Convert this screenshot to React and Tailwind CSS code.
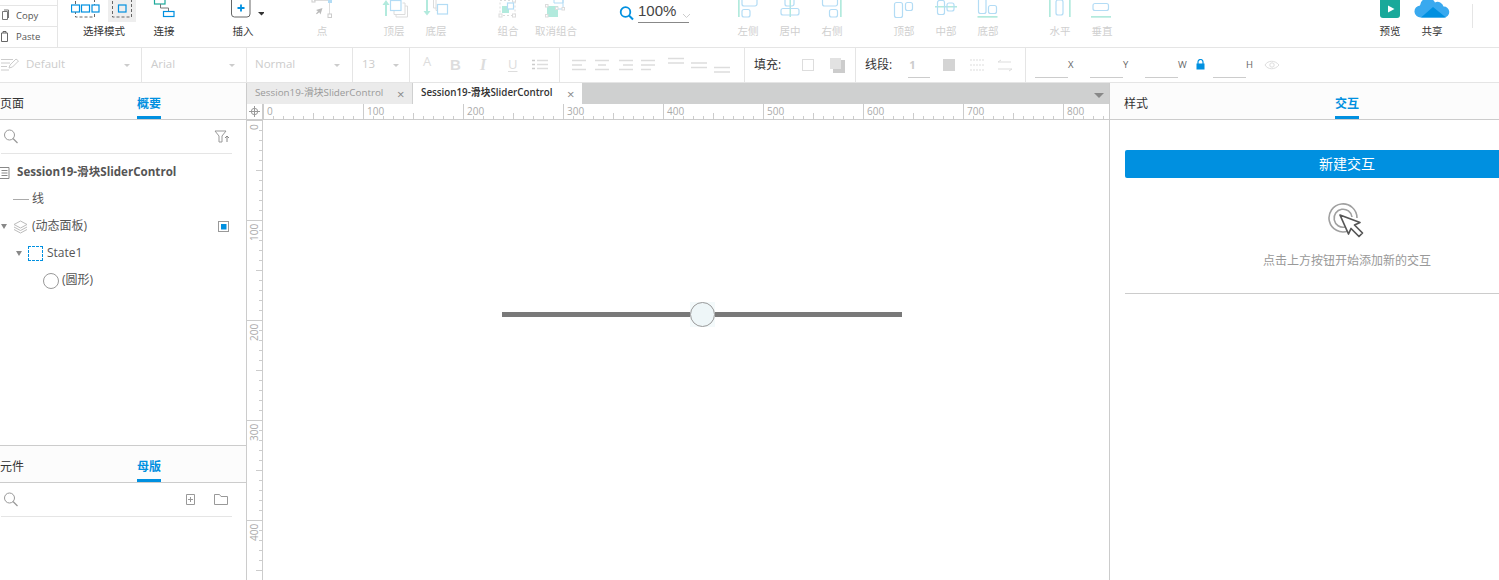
import React from "react";

const BL = "#b3dcf5";
const TL = "#b2eadd";
const GR = "#dcdcdc";
const FONT = { fontFamily: '"Open Sans","Noto Sans CJK SC",sans-serif' };

function Tool({ w = 42, ml = 0, label, dim, children }) {
  return (
    <div className="flex flex-col items-center shrink-0" style={{ width: w, marginLeft: ml }}>
      <svg width={w} height="23" viewBox={`0 0 ${w} 23`} className="block">{children}</svg>
      <div className={`mt-[1px] text-[10.5px] leading-[14px] whitespace-nowrap ${dim ? "text-[#cfcfcf]" : "text-[#333]"}`}>{label}</div>
    </div>
  );
}

const R = (p) => <rect fill="none" stroke={BL} strokeWidth="1.2" rx="2" {...p} />;
const T = (p) => <rect fill={TL} {...p} />;

function TopBar() {
  return (
    <div className="flex h-[48px] border-b border-[#e5e5e5] shrink-0 bg-white">
      <div className="w-[58px] shrink-0 border-r border-[#e5e5e5] pt-[5px] text-[9.5px] text-[#555]">
        <div className="h-[21px] border-t border-[#e5e5e5] flex items-center">
          <svg width="16" height="14" viewBox="0 0 16 14"><path d="M2.500 2.500h5v8h-5zM4 1h4.500v1.500M8.500 1v8" fill="none" stroke="#777" /></svg>
          <span>Copy</span>
        </div>
        <div className="h-[21px] border-t border-[#e5e5e5] flex items-center">
          <svg width="16" height="14" viewBox="0 0 16 14"><path d="M1.500 3h6v8.500h-6zM3 3V1.500h3V3" fill="none" stroke="#666" /></svg>
          <span>Paste</span>
        </div>
      </div>
      <Tool w={66} ml={13} label="选择模式">
        <rect x="37" y="0" width="28" height="22" fill="#eee" />
        <rect x="4.500" y="-2" width="19" height="19" fill="none" stroke="#666" strokeDasharray="3 2" />
        <g fill="#fff" stroke="#0090e0" strokeWidth="1.200"><rect x="0.500" y="5" width="8" height="7" /><rect x="10.500" y="5" width="8" height="7" /><rect x="21" y="5" width="7" height="7" /></g>
        <rect x="41.500" y="-2" width="19" height="19" fill="none" stroke="#666" strokeDasharray="3 2" />
        <rect x="47.500" y="5" width="7.500" height="7" fill="none" stroke="#0090e0" strokeWidth="1.200" />
      </Tool>
      <Tool ml={6} label="连接">
        <rect x="11.500" y="-3" width="10.500" height="7" fill="none" stroke="#19a99a" strokeWidth="1.200" />
        <path d="M17.500 4v4h8v3" fill="none" stroke="#777" />
        <rect x="20.500" y="11.500" width="10.500" height="5" fill="none" stroke="#0090e0" strokeWidth="1.200" />
      </Tool>
      <Tool ml={37} label="插入">
        <rect x="9.500" y="-4" width="18.500" height="21" rx="3" fill="none" stroke="#666" />
        <path d="M19 4.500v7M15.500 8h7" stroke="#0090e0" strokeWidth="1.800" />
        <path d="M36 12h7l-3.500 3.500z" fill="#333" />
      </Tool>
      <Tool ml={37} label="点" dim>
        <path d="M13 0.500h15.500v14" fill="none" stroke="#ddd" />
        <rect x="11" y="-1" width="3" height="3" fill="none" stroke="#ccc" />
        <rect x="27" y="-1" width="4" height="4" fill={BL} />
        <rect x="27" y="14" width="3.500" height="3.500" fill="#fff" stroke="#ccc" />
        <path d="M21.500 8l-2 6.500-1.200-2.200-2.500 2-.8-.8 2-2.300-2-1.200z" fill="#bbb" />
      </Tool>
      <Tool ml={30} label="顶层" dim>
        <path d="M13 16V2" stroke={TL} strokeWidth="2" /><path d="M9.500 5L13 0l3.500 5z" fill={TL} />
        <path d="M29.500 3h2.500v11.500H21V11M32 6h2.500V17H23v-2.500" fill="none" stroke={GR} />
        <rect x="17.500" y="0.500" width="10.500" height="10" fill="#fff" stroke={BL} strokeWidth="1.200" />
      </Tool>
      <Tool label="底层" dim>
        <path d="M12 0V12" stroke={TL} strokeWidth="2" /><path d="M8.500 11h7L12 15.500z" fill={TL} />
        <path d="M18.500 0v8h3M21 0v10.500h2" fill="none" stroke={GR} />
        <rect x="22.500" y="4.500" width="10" height="9.500" fill="#fff" stroke={BL} strokeWidth="1.200" />
      </Tool>
      <Tool ml={30} label="组合" dim>
        <rect x="13" y="0.500" width="15" height="15" fill="none" stroke={GR} strokeDasharray="2 2" />
        <g fill="#fff" stroke={GR}><rect x="25.500" y="-1" width="3" height="3" /><rect x="25.500" y="14" width="3" height="3" /><rect x="12" y="14" width="3" height="3" /></g>
        <T x="15" y="6" width="7" height="7" />
        <rect x="20.500" y="3" width="6" height="6" fill="#fff" stroke={BL} strokeWidth="1.200" />
      </Tool>
      <Tool ml={6} label="取消组合" dim>
        <path d="M19 0v3h9V-1" fill="none" stroke={BL} /><path d="M28 0v9h-6" fill="none" stroke={BL} />
        <T x="12" y="6" width="11" height="11" />
        <g fill="#fff" stroke={GR}><rect x="27" y="7.500" width="2.500" height="2.500" /><rect x="10.500" y="4.500" width="2.500" height="2.500" /><rect x="10.500" y="14.500" width="2.500" height="2.500" /><rect x="20.500" y="7" width="2.500" height="2.500" /></g>
      </Tool>
      <div className="ml-[61px] w-[51px] shrink-0 relative h-[23px] border-b border-[#888] flex items-start">
        <svg width="18" height="18" viewBox="0 0 18 18" className="absolute left-[-20px] top-[5px]"><circle cx="7.500" cy="7" r="4.800" fill="none" stroke="#0090e0" strokeWidth="1.800" /><path d="M11 10.500l4 4" stroke="#0090e0" strokeWidth="2" /></svg>
        <span className="text-[15px] leading-[22px] text-[#444]" style={{ fontFamily: '"Liberation Sans",sans-serif' }}>100%</span>
        <svg width="10" height="6" viewBox="0 0 10 6" className="absolute left-[44px] top-[13px]"><path d="M1 1l3.500 3.500L8 1" fill="none" stroke="#ccc" /></svg>
      </div>
      <Tool ml={38} label="左侧" dim>
        <rect x="11" y="-1" width="1.700" height="18" fill={TL} /><R x="15" y="-4" width="15" height="10" /><R x="15" y="9.500" width="8" height="7.500" />
      </Tool>
      <Tool label="居中" dim>
        <rect x="20.500" y="0" width="1.500" height="17" fill={TL} /><R x="16" y="-3" width="9" height="9" /><R x="12" y="8.500" width="18" height="6.500" />
      </Tool>
      <Tool label="右侧" dim>
        <rect x="29" y="-1" width="1.700" height="18" fill={TL} /><R x="11.500" y="-4" width="15" height="10" /><R x="18.500" y="9.500" width="8" height="7.500" />
      </Tool>
      <Tool ml={30} label="顶部" dim>
        <R x="11.500" y="2.500" width="8" height="15" /><R x="22.500" y="2.500" width="7" height="8" />
      </Tool>
      <Tool label="中部" dim>
        <rect x="10" y="6" width="22" height="1.500" fill={TL} /><R x="12.500" y="0.500" width="7" height="14" /><R x="22" y="3" width="7" height="8" />
      </Tool>
      <Tool label="底部" dim>
        <rect x="10.500" y="16" width="20" height="1.700" fill={TL} /><R x="11.500" y="-2" width="7.500" height="15.500" /><R x="21.500" y="5.500" width="8" height="8" />
      </Tool>
      <Tool ml={30} label="水平" dim>
        <rect x="10" y="-1" width="1.700" height="18" fill={TL} /><rect x="30" y="-1" width="1.700" height="18" fill={TL} /><R x="17" y="0" width="7" height="15" />
      </Tool>
      <Tool label="垂直" dim>
        <rect x="10" y="16" width="20" height="1.700" fill={TL} /><R x="12" y="3.500" width="15.500" height="7" />
      </Tool>
      <Tool ml={246} label="预览">
        <path d="M11 -2h20v17a3 3 0 0 1-3 3H14a3 3 0 0 1-3-3z" fill="#19a99a" />
        <path d="M19 5.500l6.500 3.500-6.500 3.500z" fill="#fff" />
      </Tool>
      <Tool label="共享">
        <path d="M10 17.500a6 6 0 0 1-1-12 8 8 0 0 1 15-3 6 6 0 0 1 8.500 4A5.500 5.500 0 0 1 33 17.500z" fill="#39a9ef" />
        <path d="M10 17.500L22 7l13 10.500z" fill="#0090e0" />
      </Tool>
      <div className="ml-[19px] mt-[4px] w-px h-[24px] bg-[#e5e5e5] shrink-0" />
    </div>
  );
}

const Caret = ({ l }) => <span className="absolute top-[16px] w-0 h-0 border-x-[3.500px] border-x-transparent border-t-[3.500px] border-t-[#ccc]" style={{ left: l }} />;

function Cell({ w, children, className = "" }) {
  return <div className={`relative shrink-0 h-full border-r border-[#e5e5e5] flex items-center ${className}`} style={{ width: w }}>{children}</div>;
}

function Coord({ label, ml = 0, w = 33, tw = 7 }) {
  return (
    <div className="flex items-center h-full shrink-0" style={{ marginLeft: ml }}>
      <div className="h-[24px] border-b border-[#ccc] mt-[1px]" style={{ width: w }} />
      <span className="text-[9.500px] text-[#666] leading-none mt-[-1px]" style={{ width: tw }}>{label}</span>
    </div>
  );
}

function FormatBar() {
  return (
    <div className="flex h-[35px] border-b border-[#e5e5e5] shrink-0 bg-white text-[11.500px] text-[#ccc]">
      <Cell w={142}>
        <svg width="20" height="16" viewBox="0 0 20 16" className="ml-[1px]"><path d="M0 2.500h12M0 6h9M0 9.500h6M0 13h8" stroke="#ccc" /><path d="M8 11l1-3 6-6 2.500 2-6 6z" fill="#fff" stroke="#ccc" /></svg>
        <span className="ml-[5px] mt-[-2px]">Default</span><Caret l={124} />
      </Cell>
      <Cell w={105}><span className="ml-[9px] mt-[-2px]">Arial</span><Caret l={87} /></Cell>
      <Cell w={106}><span className="ml-[8px] mt-[-2px]">Normal</span><Caret l={87} /></Cell>
      <Cell w={57}><span className="ml-[9px] mt-[-2px]">13</span><Caret l={40} /></Cell>
      <Cell w={150}>
        <span className="ml-[13px] w-[10px] text-[13px] mt-[-6px] text-[#ddd]">A</span>
        <span className="ml-[17px] w-[11px] text-[15px] font-bold text-[#ddd]" style={{ fontFamily: '"Liberation Sans",sans-serif' }}>B</span>
        <span className="ml-[19px] w-[8px] text-[16px] italic font-bold text-[#ddd]" style={{ fontFamily: '"Liberation Serif",serif' }}>I</span>
        <span className="ml-[20px] w-[10px] text-[13px] underline underline-offset-2 text-[#ddd]">U</span>
        <svg width="16" height="12" viewBox="0 0 16 12" className="ml-[14px]"><path d="M5 1.500h11M5 5.500h11M5 9.500h11" stroke="#ddd" strokeWidth="1.500" /><path d="M0 1.500h3M0 5.500h3M0 9.500h3" stroke="#ccc" strokeWidth="1.500" /></svg>
      </Cell>
      <Cell w={185}>
        <svg width="175" height="34" viewBox="0 0 175 34" className="ml-[1px]" stroke="#ddd" strokeWidth="1.300">
          <path d="M11 12.500h14M11 17h10M11 21.500h14" />
          <path d="M34 12.500h14M37 17h8M34 21.500h14" />
          <path d="M58 12.500h14M62 17h10M58 21.500h14" />
          <path d="M80 12.500h14M80 17h14M80 21.500h10" />
          <path d="M107 10.500h16M107 15h16" />
          <path d="M130 15h16M130 19.500h16" />
          <path d="M153 19.500h16M153 24h16" />
        </svg>
      </Cell>
      <Cell w={111}>
        <span className="ml-[9px] text-[12px] text-[#333]">填充:</span>
        <svg width="42" height="16" viewBox="0 0 42 16" className="ml-[21px]" style={{ overflow: "visible" }}>
          <rect x="0.500" y="2.500" width="11" height="11" fill="#fff" stroke="#ddd" />
          <rect x="31" y="3" width="12" height="13" fill="#ccc" /><rect x="28" y="1" width="11" height="11" fill="#e2e2e2" />
        </svg>
      </Cell>
      <Cell w={170}>
        <span className="ml-[9px] text-[12px] text-[#333]">线段:</span>
        <div className="ml-[16px] w-[22px] h-[24px] border-b border-[#ccc] mt-[1px] flex items-center font-bold text-[11px] pl-[1px]">1</div>
        <svg width="72" height="16" viewBox="0 0 72 16" className="ml-[13px]">
          <rect x="0" y="2" width="12" height="12" fill="#d4d4d4" />
          <path d="M27 3h15M27 8h15M27 13h15" stroke="#ddd" strokeDasharray="2 1" />
          <path d="M55 5h13M55 5l3-2M55 12h14M69 12l-3 2" stroke="#ddd" fill="none" />
        </svg>
      </Cell>
      <Coord label="X" ml={9} />
      <Coord label="Y" ml={15} />
      <Coord label="W" ml={15} tw={11} />
      <svg width="9" height="11" viewBox="0 0 9 11" className="ml-[7px] self-center mt-[-1px] shrink-0"><path d="M2 5V3a2.500 2.500 0 0 1 5 0v2" fill="none" stroke="#0090e0" strokeWidth="1.200" /><rect x="0.500" y="4.500" width="8" height="6" fill="#0090e0" /></svg>
      <Coord label="H" ml={8} />
      <svg width="16" height="10" viewBox="0 0 16 10" className="ml-[11px] self-center shrink-0"><path d="M1 5c3-5 10-5 14 0-4 5-11 5-14 0z" fill="none" stroke="#ddd" /><circle cx="8" cy="5" r="2.200" fill="none" stroke="#ddd" /></svg>
    </div>
  );
}

const Search = () => (
  <svg width="16" height="16" viewBox="0 0 16 16"><circle cx="6.500" cy="6" r="5" fill="none" stroke="#999" /><path d="M10 9.500l4.500 4.500" stroke="#999" strokeWidth="1.200" /></svg>
);

function PanelTabs({ a, b }) {
  return (
    <div className="flex h-[37px] bg-[#fcfcfc] border-b border-[#ccc] shrink-0 text-[12px]">
      <div className="w-[137px] leading-[41px] text-[#333]">{a}</div>
      <div className="h-[36px] leading-[41px] font-bold text-[#0090e0] border-b-[3px] border-[#0090e0] w-[24px] box-border whitespace-nowrap">{b}</div>
    </div>
  );
}

function TreeRow({ children, text, bold, end }) {
  return (
    <div className={`flex items-center h-[27px] text-[#555] ${bold ? "font-bold text-[11.6px]" : "text-[12px]"}`}>
      {children}<span className="whitespace-nowrap mt-[-1px]">{text}</span>{end}
    </div>
  );
}

const Tri = ({ ml }) => <span className="shrink-0 w-0 h-0 border-x-[3.500px] border-x-transparent border-t-[5px] border-t-[#888]" style={{ marginLeft: ml }} />;

function LeftPanel() {
  return (
    <div className="w-[247px] shrink-0 border-r border-[#ccc] flex flex-col h-full bg-white">
      <PanelTabs a="页面" b="概要" />
      <div className="h-[326px] border-b border-[#ccc] flex flex-col shrink-0">
        <div className="ml-[1px] w-[231px] h-[34px] border-b border-[#e5e5e5] flex items-center justify-between pl-[2px] pr-[2px] shrink-0">
          <Search />
          <svg width="16" height="14" viewBox="0 0 16 14"><path d="M1 1h11L8 6v6H5V6z" fill="none" stroke="#999" /><path d="M13 12V6M11 8l2-2 2 2" fill="none" stroke="#888" /></svg>
        </div>
        <div className="pt-[5px]">
          <TreeRow bold text="Session19-滑块SliderControl">
            <svg width="17" height="12" viewBox="0 0 17 12" className="shrink-0"><path d="M-1 .5h10v11H-1zM1.500 3.500h6M1.500 6h6M1.500 8.500h6" fill="none" stroke="#888" /></svg>
          </TreeRow>
          <TreeRow text="线">
            <span className="ml-[13px] mr-[3px] w-[16px] h-[1.500px] bg-[#aaa] shrink-0" />
          </TreeRow>
          <TreeRow text="(动态面板)" end={
            <svg width="12" height="12" viewBox="0 0 12 12" className="ml-auto mr-[16px] shrink-0"><rect x="0.500" y="0.500" width="10" height="10" fill="#fff" stroke="#999" /><rect x="3" y="3" width="5.500" height="5.500" fill="#0090e0" /></svg>
          }>
            <Tri ml={1} />
            <svg width="15" height="14" viewBox="0 0 15 14" className="ml-[6px] mr-[4px] shrink-0"><path d="M7.500 1L14 4.500 7.500 8 1 4.500zM1 7l6.500 3.500L14 7M1 9.500L7.500 13 14 9.500" fill="none" stroke="#bbb" /></svg>
          </TreeRow>
          <TreeRow text="State1">
            <Tri ml={16} />
            <span className="ml-[6px] mr-[4px] w-[15px] h-[15px] border border-dashed border-[#0090e0] shrink-0" />
          </TreeRow>
          <TreeRow text="(圆形)">
            <span className="ml-[43px] mr-[3px] w-[16px] h-[16px] rounded-full border border-[#999] shrink-0" />
          </TreeRow>
        </div>
      </div>
      <PanelTabs a="元件" b="母版" />
      <div className="ml-[1px] w-[231px] h-[34px] border-b border-[#e5e5e5] flex items-center pl-[2px] shrink-0">
        <Search />
        <svg width="10" height="11" viewBox="0 0 10 11" className="ml-[167px]"><path d="M.5.500h8v10h-8zM4.500 3v5M2 5.500h5" fill="none" stroke="#999" /></svg>
        <svg width="14" height="11" viewBox="0 0 14 11" className="ml-[18px]"><path d="M.5 10.500V.5h5l1.500 2h6.500v8z" fill="none" stroke="#999" /></svg>
      </div>
    </div>
  );
}

function HRuler() {
  const ticks = [];
  for (let i = 0; i <= 840; i += 10) {
    const major = i % 100 === 0;
    const h = major ? 15 : i % 50 === 0 ? 6 : 3;
    ticks.push(<rect key={i} x={i} y={15 - h} width="1" height={h} fill="#ccc" />);
    if (major) ticks.push(<text key={"t" + i} x={i + 4} y="11" fontSize="10" fill="#aaa">{i}</text>);
  }
  return <svg width="846" height="15" viewBox="0 0 846 15" className="block" style={FONT}>{ticks}</svg>;
}

function VRuler() {
  const ticks = [];
  for (let i = 0; i <= 460; i += 10) {
    const major = i % 100 === 0;
    const w = major ? 15 : i % 50 === 0 ? 6 : 3;
    ticks.push(<rect key={i} x={15 - w} y={i} width={w} height="1" fill="#ccc" />);
    if (major) ticks.push(<text key={"t" + i} transform={`translate(11 ${i + (i === 0 ? 10 : 21)}) rotate(-90)`} fontSize="10" fill="#aaa">{i}</text>);
  }
  return <svg width="15" height="460" viewBox="0 0 15 460" className="block" style={FONT}>{ticks}</svg>;
}

function Center() {
  return (
    <div className="flex-1 min-w-0 flex flex-col h-full bg-white overflow-hidden">
      <div className="flex h-[21px] bg-[#cfd0d0] shrink-0 relative text-[9.800px]">
        <div className="w-[165px] bg-[#ebebeb] flex items-center pl-[8px] text-[#999] relative whitespace-nowrap">Session19-滑块SliderControl<span className="absolute left-[150px] text-[13px] leading-none text-[#888] top-[5px]">×</span></div>
        <div className="ml-px w-[169px] bg-white flex items-center pl-[8px] text-[#333] font-semibold relative whitespace-nowrap">Session19-滑块SliderControl<span className="absolute left-[154px] text-[13px] leading-none font-normal text-[#888] top-[5px]">×</span></div>
        <span className="absolute left-[847px] top-[10px] w-0 h-0 border-x-[5px] border-x-transparent border-t-[5px] border-t-[#888]" />
      </div>
      <div className="flex h-[16px] border-b border-[#ccc] shrink-0">
        <div className="w-[16px] border-r border-[#ccc] flex items-center justify-center shrink-0">
          <svg width="11" height="11" viewBox="0 0 11 11"><circle cx="5.500" cy="5.500" r="3.200" fill="none" stroke="#999" /><path d="M5.500 0v11M0 5.500h11" stroke="#999" /></svg>
        </div>
        <HRuler />
      </div>
      <div className="flex flex-1 min-h-0">
        <div className="w-[16px] border-r border-[#ccc] shrink-0 overflow-hidden"><VRuler /></div>
        <div className="relative flex-1 bg-white">
          <div className="absolute left-[239px] top-[192px] w-[400px] h-[5px] bg-[#797979]" />
          <div className="absolute left-[427px] top-[182px] w-[25px] h-[25px] bg-[#f4fafb]">
            <div className="w-full h-full rounded-full bg-[#eef6f8] border border-[#999]" />
          </div>
        </div>
      </div>
    </div>
  );
}

function RightPanel() {
  return (
    <div className="w-[390px] shrink-0 border-l border-[#ccc] h-full bg-white overflow-hidden">
      <div className="flex h-[37px] bg-[#fcfcfc] border-b border-[#ccc] text-[12px]">
        <div className="w-[225px] pl-[14px] leading-[41px] text-[#333]">样式</div>
        <div className="h-[36px] w-[24px] leading-[41px] font-bold text-[#0090e0] border-b-[3px] border-[#0090e0] box-border whitespace-nowrap">交互</div>
      </div>
      <div className="ml-[15px] w-[444px] pt-[30px]">
        <div className="h-[28px] bg-[#0090e0] rounded-[2px] text-white text-[14px] leading-[27px] text-center">新建交互</div>
        <svg width="38" height="38" viewBox="0 0 38 38" className="block mx-auto mt-[25px]">
          <path d="M20 28A14 14 0 1 1 29 15" fill="none" stroke="#a0a0a0" strokeWidth="1.600" />
          <path d="M17 24A9 9 0 1 1 24 14" fill="none" stroke="#a0a0a0" strokeWidth="1.600" />
          <path d="M12 12l20 7.500-5.500 2.500 8 8-3.500 3.500-8-8-2.500 5.500z" fill="#fff" stroke="#555" strokeWidth="1.700" strokeLinejoin="round" />
        </svg>
        <div className="mt-[10px] text-center text-[12px] leading-[20px] text-[#999]">点击上方按钮开始添加新的交互</div>
        <div className="mt-[22px] h-px bg-[#ccc]" />
      </div>
    </div>
  );
}

export default function App() {
  return (
    <div className="w-[1499px] h-[580px] overflow-hidden flex flex-col bg-white" style={FONT}>
      <TopBar />
      <FormatBar />
      <div className="flex flex-1 min-h-0">
        <LeftPanel />
        <Center />
        <RightPanel />
      </div>
    </div>
  );
}
